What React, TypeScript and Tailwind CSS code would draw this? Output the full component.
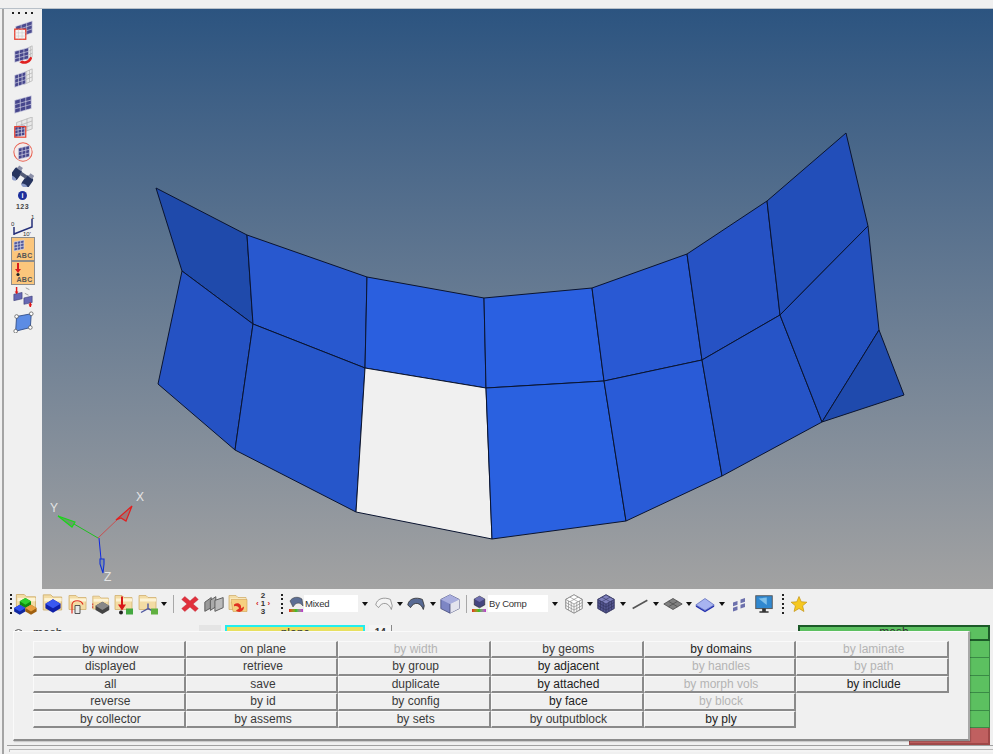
import React from "react";

type P = { children: React.ReactNode; s?: number };
const Ic = ({ children, s = 22 }: P) => (
  <svg width={s} height={s} viewBox="0 0 24 24">{children}</svg>
);

const Grid = ({ x, y, w, h, sk, fill, stroke = "#d8d8e8" }: { x: number; y: number; w: number; h: number; sk: number; fill: string; stroke?: string }) => {
  const cells = [];
  for (let i = 0; i <= 3; i++) {
    const px = x + (w * i) / 3;
    cells.push(<line key={"v" + i} x1={px} y1={y - (sk * i) / 3} x2={px} y2={y + h - (sk * i) / 3} stroke={stroke} strokeWidth="0.7" />);
    const py = y + (h * i) / 3;
    cells.push(<line key={"h" + i} x1={x} y1={py} x2={x + w} y2={py - sk} stroke={stroke} strokeWidth="0.7" />);
  }
  return (
    <g>
      <path d={`M${x} ${y}L${x + w} ${y - sk}V${y + h - sk}L${x} ${y + h}Z`} fill={fill} />
      {cells}
    </g>
  );
};

const Mesh1 = () => (
  <Ic>
    <Grid x={4} y={7} w={18} h={13} sk={6} fill="#4c4c90" />
    <rect x="3" y="10" width="12" height="11" fill="#f4f4f4" stroke="#e84030" strokeWidth="1.4" />
    <path d="M3 14H15M3 17.5H15M7 10V21M11 10V21" stroke="#c8c8c8" strokeWidth=".6" />
  </Ic>
);
const Mesh2 = () => (
  <Ic>
    <Grid x={16} y={5} w={6} h={12} sk={3} fill="#eeeeee" stroke="#aaaaaa" />
    <Grid x={3} y={8} w={15} h={12} sk={4} fill="#46468c" />
    <path d="M11 18C15 20 18 18 20 14L22 15C21 20 15 23 10 21L8 20Z" fill="#e02020" />
  </Ic>
);
const Mesh3 = () => (
  <Ic>
    <Grid x={13} y={5} w={9} h={13} sk={4} fill="#eeeeee" stroke="#aaaaaa" />
    <Grid x={3} y={8} w={12} h={13} sk={4} fill="#46468c" />
  </Ic>
);
const Mesh4 = () => (
  <Ic>
    <Grid x={3} y={8} w={18} h={14} sk={5} fill="#46468c" />
  </Ic>
);
const Mesh5 = () => (
  <Ic>
    <Grid x={5} y={6} w={17} h={13} sk={6} fill="#e8e8e8" stroke="#aaaaaa" />
    <Grid x={3} y={11} w={11} h={11} sk={2} fill="#46468c" />
    <rect x="3" y="10.5" width="12" height="11.5" fill="none" stroke="#e84030" strokeWidth="1.3" />
  </Ic>
);
const Mesh6 = () => (
  <Ic>
    <circle cx="12" cy="12" r="10" fill="#f4ecec" stroke="#e86050" strokeWidth="1.1" />
    <Grid x={7} y={8} w={12} h={12} sk={3} fill="#46468c" />
  </Ic>
);
const Binoculars = () => (
  <Ic>
    <g transform="rotate(35 12 12)">
      <rect x="0" y="8" width="9" height="13" rx="3" fill="#26345f" />
      <rect x="15" y="8" width="9" height="13" rx="3" fill="#26345f" />
      <rect x="8" y="9" width="8" height="4" fill="#555d78" />
      <ellipse cx="4.5" cy="20" rx="3.8" ry="1.8" fill="#8a9ac8" />
      <ellipse cx="19.5" cy="20" rx="3.8" ry="1.8" fill="#8a9ac8" />
      <rect x="2" y="5" width="5" height="4" fill="#8a8fa8" />
      <rect x="17" y="5" width="5" height="4" fill="#8a8fa8" />
    </g>
  </Ic>
);
const Info123 = () => (
  <div className="flex w-[24px] flex-col items-center font-['Liberation_Sans',sans-serif]">
    <div className="flex h-[9px] w-[9px] items-center justify-center rounded-full bg-[#1c2f9c] text-[7px] font-bold leading-none text-white">i</div>
    <div className="mt-[3px] text-[7px] font-bold leading-none tracking-[0.5px] text-[#444]">123</div>
  </div>
);
const Measure = () => (
  <Ic s={24}>
    <path d="M3 22V14M3 21L21 14V6" stroke="#26307a" strokeWidth="1.5" fill="none" />
    <text x="0" y="13" fontSize="6" fill="#333" fontFamily="Liberation Sans">0</text>
    <text x="20" y="6" fontSize="6" fill="#333" fontFamily="Liberation Sans">1</text>
    <text x="12" y="23" fontSize="6" fill="#333" fontFamily="Liberation Sans">10'</text>
  </Ic>
);
const AbcBtn = ({ kind }: { kind: "grid" | "arrow" }) => (
  <div className="relative h-[24px] w-[24px] border border-[#8c8c8c] bg-[#fbc67c] font-['Liberation_Sans',sans-serif]">
    {kind === "grid" ? (
      <svg className="absolute left-[1px] top-[1px]" width="13" height="13" viewBox="0 0 13 13">
        <Grid x={1} y={3} w={10} h={9} sk={2} fill="#50589c" />
      </svg>
    ) : (
      <svg className="absolute left-[1px] top-[0px]" width="13" height="15" viewBox="0 0 13 15">
        <path d="M5 1V9" stroke="#d81c1c" strokeWidth="2" />
        <path d="M2 7H8L5 11Z" fill="#d81c1c" />
        <circle cx="5" cy="12.5" r="1.6" fill="#222" />
      </svg>
    )}
    <span className="absolute bottom-[1px] right-[1px] text-[7px] font-bold leading-none tracking-[0.3px] text-[#555]">ABC</span>
  </div>
);
const Translate = () => (
  <Ic>
    <path d="M2 9L11 7V14L2 16Z" fill="#6668b4" stroke="#33356e" strokeWidth=".6" />
    <path d="M13 13L22 11V18L13 20Z" fill="#6668b4" stroke="#33356e" strokeWidth=".6" />
    <path d="M5 1V7M20 18V23" stroke="#e01818" strokeWidth="1.6" />
    <path d="M3 6H7L5 9ZM18 20H22L20 23Z" fill="#e01818" />
    <path d="M15 2L19 4M14 8L18 10" stroke="#999" strokeWidth="1" />
  </Ic>
);
const SurfaceIc = () => (
  <Ic>
    <path d="M5 6L21 3L20 18L4 22Z" fill="#5c8ce4" stroke="#33508a" strokeWidth="1" />
    {[[5, 6], [21, 3], [20, 18], [4, 22]].map(([x, y]) => (
      <circle key={x} cx={x} cy={y} r="2" fill="#fff" stroke="#555" strokeWidth=".8" />
    ))}
  </Ic>
);

const Folder = ({ children }: { children?: React.ReactNode }) => (
  <Ic s={27}>
    <path d="M3 4H10L12 6H20V18H3Z" fill="#f3dca4" stroke="#d0b070" strokeWidth=".8" />
    <path d="M4 7H20V10H4Z" fill="#fdf3d4" />
    {children}
  </Ic>
);
const Block = ({ x, y, c, d, s = 1 }: { x: number; y: number; c: string; d: string; s?: number }) => (
  <g transform={`translate(${x} ${y}) scale(${s})`}>
    <path d="M0 3L5 0L10 3V6L5 9L0 6Z" fill={d} />
    <path d="M0 3L5 0L10 3L5 6Z" fill={c} />
  </g>
);
const Dots = () => (
  <div className="flex h-[22px] flex-col justify-between py-[1px]">
    {[0, 1, 2, 3, 4].map((i) => (
      <div key={i} className="h-[2px] w-[2px] bg-[#222]" />
    ))}
  </div>
);
const Arrow = () => (
  <div className="h-0 w-0 border-x-[3.5px] border-t-[4px] border-x-transparent border-t-[#111]" />
);
const Sep = () => <div className="h-[18px] w-[1px] bg-[#a8a8a8]" />;
const Combo = ({ t }: { t: string }) => (
  <div className="flex h-[17px] w-full items-center bg-white pl-[1px] text-[9.5px] leading-none tracking-[-0.2px] text-[#333]">{t}</div>
);
const ArchIc = ({ f, st }: { f: string; st: string }) => (
  <Ic>
    <path d="M3 13C4 6 12 4 19 7L21 14L20 18C17 10 10 9 6 16Z" fill={f} stroke={st} strokeWidth=".9" />
  </Ic>
);
const CubeFace = () => (
  <Ic>
    <path d="M12 2L22 7V17L12 22L2 17V7Z" fill="#7d86c4" stroke="#3c4270" strokeWidth=".8" />
    <path d="M2 7L12 12L22 7L12 2Z" fill="#a9aede" />
    <path d="M12 12L22 7V17L12 22Z" fill="#e4e4ee" />
    <path d="M12 12V22" stroke="#3c4270" strokeWidth=".8" />
  </Ic>
);
const RainbowBar = () => (
  <div className="h-[3px] w-[14px] bg-gradient-to-r from-[#e02020] via-[#20c020] to-[#c020d0]" />
);
const Cube3 = ({ f, t, st }: { f: string; t: string; st: string }) => (
  <Ic>
    <path d="M12 2L21 7V17L12 22L3 17V7Z" fill={f} stroke={st} strokeWidth=".9" />
    <path d="M3 7L12 12L21 7L12 2Z" fill={t} stroke={st} strokeWidth=".7" />
    <path d="M12 12V22M6 8.7V18.7M9 10.3V20.3M18 8.7V18.7M15 10.3V20.3M3 10.3L12 15.3L21 10.3M3 13.6L12 18.6L21 13.6M7.5 4.5L16.5 9.5M16.5 4.5L7.5 9.5" stroke={st} strokeWidth=".6" fill="none" />
  </Ic>
);

const Slot = ({ c, children }: { c: string; children?: React.ReactNode }) => (
  <div className={"flex shrink-0 items-center justify-center " + c}>{children}</div>
);

const G = "text-[#b4b4b4]";
const K = "text-[#222]";
const N = "text-[#3a3a3a]";
const cells: [string, string][] = [
  ["by window", N], ["on plane", N], ["by width", G], ["by geoms", N], ["by domains", K], ["by laminate", G],
  ["displayed", N], ["retrieve", N], ["by group", N], ["by adjacent", K], ["by handles", G], ["by path", G],
  ["all", N], ["save", N], ["duplicate", N], ["by attached", K], ["by morph vols", G], ["by include", K],
  ["reverse", N], ["by id", N], ["by config", N], ["by face", K], ["by block", G], ["", ""],
  ["by collector", N], ["by assems", N], ["by sets", N], ["by outputblock", N], ["by ply", K],
];

const Quad = ({ p, f }: { p: string; f: string }) => (
  <polygon points={p} fill={f} stroke="#0a1430" strokeWidth="1" strokeLinejoin="round" />
);

export default function App() {
  return (
    <div className="h-[754px] w-[1000px] overflow-hidden bg-white font-['Liberation_Sans',sans-serif]">
      <div className="flex h-full w-[993px] flex-col bg-[#f0f0f0]">
        <div className="h-[9px] shrink-0 border-b border-[#b8c0c8]" />
        <div className="flex h-[580px] shrink-0">
          <div className="ml-[2px] flex w-[40px] shrink-0 flex-col items-center border-l-2 border-[#a4a4a4] pr-[1px]">
            <div className="flex h-[8px] items-center gap-[4.5px]">
              {[0, 1, 2, 3].map((i) => <div key={i} className="h-[2px] w-[2px] bg-[#222]" />)}
            </div>
            <div className="mt-[2px] flex flex-col items-center">
              {[<Mesh1 />, <Mesh2 />, <Mesh3 />, <Mesh4 />, <Mesh5 />, <Mesh6 />, <Binoculars />, <Info123 />, <Measure />].map((n, i) => (
                <div key={i} className="flex h-[24.2px] items-center justify-center">{n}</div>
              ))}
              <AbcBtn kind="grid" />
              <AbcBtn kind="arrow" />
              <div className="flex h-[25px] items-center"><Translate /></div>
              <div className="flex h-[25px] items-center"><SurfaceIc /></div>
            </div>
          </div>
          <div className="min-w-0 flex-1 bg-gradient-to-b from-[#2c5480] to-[#a2a2a2]">
            <svg width="951" height="580" viewBox="42 9 951 580" className="block">
              <Quad p="156,188 247,235 253,324 182,271" f="#1f4aab" />
              <Quad p="247,235 367,277 365,368 253,324" f="#2858cf" />
              <Quad p="367,277 484,298 486,388 365,368" f="#2a5fdf" />
              <Quad p="484,298 592,288 604,381 486,388" f="#2a60e1" />
              <Quad p="592,288 687,254 702,360 604,381" f="#2959d3" />
              <Quad p="687,254 767,201 780,315 702,360" f="#2652c4" />
              <Quad p="767,201 846,133 868,226 780,315" f="#224eb9" />
              <Quad p="182,271 253,324 235,450 158,384" f="#2552c3" />
              <Quad p="253,324 365,368 356,512 235,450" f="#2656ca" />
              <Quad p="365,368 486,388 492,539 356,512" f="#f0f0f0" />
              <Quad p="486,388 604,381 626,521 492,539" f="#2a61e0" />
              <Quad p="604,381 702,360 722,476 626,521" f="#295bd7" />
              <Quad p="702,360 780,315 822,422 722,476" f="#2654c7" />
              <Quad p="780,315 868,226 879,330 822,422" f="#2350bf" />
              <Quad p="879,330 904,395 822,422" f="#1f4aad" />
              <g fill="none" strokeWidth="1">
                <path d="M98 538L120 517" stroke="#c85050" />
                <path d="M116 520L132 506L126 521L121 518Z" stroke="#e02020" strokeWidth="1.2" fill="#9c7878" />
                <path d="M98 538L74 524" stroke="#20c020" />
                <path d="M58 516L75 522L72 527Z" stroke="#18d818" strokeWidth="1.2" fill="#6a9a6a" />
                <path d="M99 538L101 559" stroke="#1028e0" />
                <path d="M100 559H104V564L103 573L100 564Z" stroke="#1030d8" strokeWidth="1.1" fill="#8090a8" />
              </g>
              <g fontFamily="Liberation Sans" fontSize="12" fill="#e4e4e4">
                <text x="136" y="501">X</text>
                <text x="50" y="512">Y</text>
                <text x="104" y="581">Z</text>
              </g>
            </svg>
          </div>
        </div>
        <div className="ml-[2px] flex h-[29px] shrink-0 items-center border-l-2 border-[#a4a4a4] pl-[5px]">
          <Slot c="w-[3px]"><Dots /></Slot>
          <Slot c="w-[28px]">
            <Folder>
              <Block x={6} y={7} c="#30d030" d="#108a10" />
              <Block x={1} y={13} c="#3050f0" d="#1028a0" />
              <Block x={11} y={13} c="#e8a040" d="#a06010" />
            </Folder>
          </Slot>
          <Slot c="w-[26px]"><Folder><Block x={5} y={8} c="#3a58f0" d="#1020a8" s={1.4} /></Folder></Slot>
          <Slot c="w-[24px]"><Folder><path d="M6 22V13C7 8 15 8 17 13" fill="none" stroke="#e03020" strokeWidth="1.2" /><path d="M9 22V14H14V22Z" fill="#e8e8e8" stroke="#444" strokeWidth=".9" /></Folder></Slot>
          <Slot c="w-[22px]"><Folder><Block x={6} y={10} c="#888" d="#444" s={1.5} /><path d="M3 12V18" stroke="#d02020" strokeWidth="1" strokeDasharray="2 1" /></Folder></Slot>
          <Slot c="w-[24px]"><Folder><path d="M10 5V16" stroke="#d81818" strokeWidth="2" /><path d="M6 13H14L10 19Z" fill="#d81818" /><circle cx="9" cy="21" r="2" fill="#222" /><rect x="14" y="17" width="7" height="6" fill="#44a840" /></Folder></Slot>
          <Slot c="w-[24px]"><Folder><path d="M12 12V17L5 21M12 17L18 20" stroke="#5058a0" strokeWidth="1.4" fill="none" /><rect x="15" y="17" width="7" height="6" fill="#60b040" /></Folder></Slot>
          <Slot c="w-[8px]"><Arrow /></Slot>
          <Slot c="w-[10px]"><Sep /></Slot>
          <Slot c="w-[24px]"><Ic s={18}><path d="M5 2L12 8L19 2L23 6L16 12L23 18L19 22L12 16L5 22L1 18L8 12L1 6Z" fill="#e0303c" stroke="#c02030" strokeWidth=".6" strokeLinejoin="round" /></Ic></Slot>
          <Slot c="w-[24px]"><Ic><path d="M2 10L9 5V16L2 20Z" fill="#9a9a9a" stroke="#555" /><path d="M8 8L14 4V15L8 19Z" fill="#aaaaaa" stroke="#555" /><path d="M13 8L22 5V16L13 20Z" fill="#bbbbbb" stroke="#555" /></Ic></Slot>
          <Slot c="w-[24px]"><Folder><path d="M5 8H21V20H7Z" fill="#f6d080" stroke="#d0a050" strokeWidth=".6" /><path d="M8 13C12 10 16 13 15 17L18 15C18 20 13 22 10 19L13 17C13 15 10 14 8 15Z" fill="#e03020" /></Folder></Slot>
          <Slot c="w-[26px] text-[8px] font-bold leading-[8px] text-[#333]">
            <div className="flex flex-col items-center"><span>2</span><span className="text-[#d02020]">‹ <span className="text-[#333]">1</span> ›</span><span>3</span></div>
          </Slot>
          <Slot c="w-[12px]"><Dots /></Slot>
          <Slot c="w-[16px]">
            <div className="flex flex-col items-center">
              <svg width="15" height="13" viewBox="0 0 15 13"><path d="M1 5C3 1 9 0 13 3L14 10C11 6 7 6 4 11Z" fill="#5c6e94" stroke="#333" strokeWidth=".5" /></svg>
              <RainbowBar />
            </div>
          </Slot>
          <Slot c="w-[54px]"><Combo t="Mixed" /></Slot>
          <Slot c="w-[14px]"><Arrow /></Slot>
          <Slot c="w-[24px]"><ArchIc f="#f4f4f4" st="#888" /></Slot>
          <Slot c="w-[8px]"><Arrow /></Slot>
          <Slot c="w-[24px]"><ArchIc f="#586a94" st="#333" /></Slot>
          <Slot c="w-[10px]"><Arrow /></Slot>
          <Slot c="w-[24px]"><CubeFace /></Slot>
          <Slot c="w-[8px]"><Sep /></Slot>
          <Slot c="w-[18px]">
            <div className="flex flex-col items-center">
              <svg width="15" height="14" viewBox="0 0 24 24"><path d="M12 2L21 7V17L12 22L3 17V7Z" fill="#45457e" stroke="#222" /><path d="M3 7L12 12L21 7L12 2Z" fill="#7070b0" /></svg>
              <RainbowBar />
            </div>
          </Slot>
          <Slot c="w-[60px]"><Combo t="By Comp" /></Slot>
          <Slot c="w-[14px]"><Arrow /></Slot>
          <Slot c="w-[24px]"><Cube3 f="#f8f8f8" t="#ffffff" st="#777" /></Slot>
          <Slot c="w-[8px]"><Arrow /></Slot>
          <Slot c="w-[24px]"><Cube3 f="#53558e" t="#7f81bd" st="#2e2f58" /></Slot>
          <Slot c="w-[10px]"><Arrow /></Slot>
          <Slot c="w-[24px]"><Ic><path d="M4 17L20 8" stroke="#555" strokeWidth="1.8" /></Ic></Slot>
          <Slot c="w-[8px]"><Arrow /></Slot>
          <Slot c="w-[26px]"><Ic><path d="M2 12L12 6L22 12L12 18Z" fill="#808080" stroke="#555" /><path d="M7 9L17 15M17 9L7 15" stroke="#444" strokeWidth=".7" /></Ic></Slot>
          <Slot c="w-[6px]"><Arrow /></Slot>
          <Slot c="w-[26px]"><Ic><path d="M2 13V15L12 21L22 15V13L12 19Z" fill="#2430b0" /><path d="M2 13L12 6L22 13L12 19Z" fill="#a8b4f0" stroke="#4858b0" strokeWidth=".7" /></Ic></Slot>
          <Slot c="w-[8px]"><Arrow /></Slot>
          <Slot c="w-[26px]"><Ic s={18}><path d="M4 10L10 8V13L4 15ZM14 6L20 4V9L14 11ZM4 17L10 15V20L4 22ZM14 13L20 11V16L14 18Z" fill="#6c70ac" /></Ic></Slot>
          <Slot c="w-[24px]"><Ic><rect x="3" y="3" width="18" height="14" fill="#3088d0" stroke="#555" /><path d="M6 6L15 5V13Z" fill="#80c0ea" /><path d="M10 17H14V20H10ZM7 20H17V21.5H7Z" fill="#333" /></Ic></Slot>
          <Slot c="w-[14px]"><Dots /></Slot>
          <Slot c="w-[18px]"><Ic><path d="M12 2L15 9L22.5 9.6L16.8 14.4L18.6 22L12 18L5.4 22L7.2 14.4L1.5 9.6L9 9Z" fill="#f6c820" stroke="#c09010" strokeWidth=".9" /></Ic></Slot>
        </div>
        <div className="relative ml-[2px] flex-1 border-l-2 border-[#a4a4a4]">
          <div className="flex h-[127px] items-start pt-[7px] text-[12px] leading-[12px] text-[#333]">
            <div className="ml-[10px] mt-[4px] h-[9px] w-[9px] rounded-full border border-[#555] bg-white" />
            <span className="ml-[10px] mt-[2px]">mesh</span>
            <div className="ml-[137px] flex h-[17px] w-[22px] justify-center bg-[#e4e4e4] pt-[6px]"><div className="h-[2px] w-[9px] bg-[#444]" /></div>
            <div className="ml-[4px] h-[17px] w-[140px] border-2 border-[#22eeee] bg-[#e8e060] text-center leading-[12px]">plane</div>
            <div className="ml-[4px] h-[17px] w-[23px] border-r border-[#888] bg-[#f4f4f4] pt-[3px] text-center text-[10px] font-bold leading-[10px]">14</div>
            <div className="ml-auto flex w-[192px] flex-col">
              <div className="h-[16px] border-2 border-[#1c5a28] bg-[#5cc060] text-center leading-[11px]">mesh</div>
              {[0, 1, 2, 3, 4].map((i) => (
                <div key={i} className="h-[17.4px] border-b border-r border-[#3a8a46] bg-[#5cc060]" />
              ))}
              <div className="ml-auto h-[17px] w-[81px] border-b-2 border-l border-r-2 border-[#a04848] bg-[#c06060] text-center leading-[16px]">return</div>
            </div>
            <div className="w-[3px]" />
          </div>
          <div className="ml-[3px] h-[1px] bg-[#a0a0a0]" />
          <div className="ml-[5px] mt-[3px] h-[3px] border-l border-t border-[#b8b8b8] bg-[#f4f4f4]" />
          <div className="absolute left-[9px] top-[13px] h-[110px] w-[957px] border-b-2 border-l border-r-2 border-t border-b-[#8c8c8c] border-l-[#fafafa] border-r-[#a8a8a8] border-t-[#fafafa] bg-[#f0f0f0] pl-[19px] pt-[9px] shadow-[1px_1px_1px_rgba(0,0,0,0.15)]">
            <div className="grid w-[916px] grid-cols-6">
              {cells.map(([t, c], i) =>
                t ? (
                  <div key={i} className={"h-[17.4px] border-b-2 border-l border-r-2 border-t border-b-[#8a8a8a] border-l-[#fafafa] border-r-[#8a8a8a] border-t-[#fafafa] bg-[#f0f0f0] pl-[3px] text-center text-[12px] leading-[15px] " + c}>{t}</div>
                ) : (
                  <div key={i} />
                )
              )}
            </div>
          </div>
        </div>
      </div>
    </div>
  );
}
